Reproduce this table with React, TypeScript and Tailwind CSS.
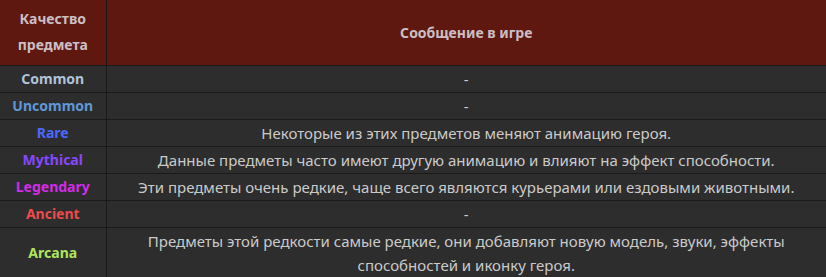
const ROWS = [
  { name: "Common", color: "text-[#b0c3d9]", msg: "-" },
  { name: "Uncommon", color: "text-[#5e98d9]", msg: "-" },
  { name: "Rare", color: "text-[#4b69ff]", msg: "Некоторые из этих предметов меняют анимацию героя." },
  { name: "Mythical", color: "text-[#8847ff]", msg: "Данные предметы часто имеют другую анимацию и влияют на эффект способности." },
  { name: "Legendary", color: "text-[#d32ce6]", msg: "Эти предметы очень редкие, чаще всего являются курьерами или ездовыми животными." },
  { name: "Ancient", color: "text-[#eb4b4b]", msg: "-" },
  {
    name: "Arcana",
    color: "text-[#ade55c]",
    msg: "Предметы этой редкости самые редкие, они добавляют новую модель, звуки, эффекты способностей и иконку героя.",
  },
];

export default function App() {
  return (
    <div className="h-[277px] w-[826px] overflow-hidden bg-[#2d2d2d] font-['Noto_Sans',sans-serif] text-[14px]">
      <table className="w-full border-collapse">
        <thead>
          <tr className="h-[65px] bg-[#5e1810] text-[#cbbfc3]">
            <th className="w-[106px] border-r border-b border-[#1a1a1a] px-2 text-center font-bold leading-[26px]">
              Качество предмета
            </th>
            <th className="border-b border-[#1a1a1a] text-center font-bold">Сообщение в игре</th>
          </tr>
        </thead>
        <tbody>
          {ROWS.map((r) => (
            <tr key={r.name}>
              <td
                className={`border-r border-b border-[#1a1a1a] py-px text-center font-bold leading-6 ${r.color}`}
              >
                {r.name}
              </td>
              <td className="border-b border-[#1a1a1a] px-3 py-px text-center text-[15px] leading-6 text-[#cacaca]">
                {r.msg}
              </td>
            </tr>
          ))}
        </tbody>
      </table>
    </div>
  );
}
